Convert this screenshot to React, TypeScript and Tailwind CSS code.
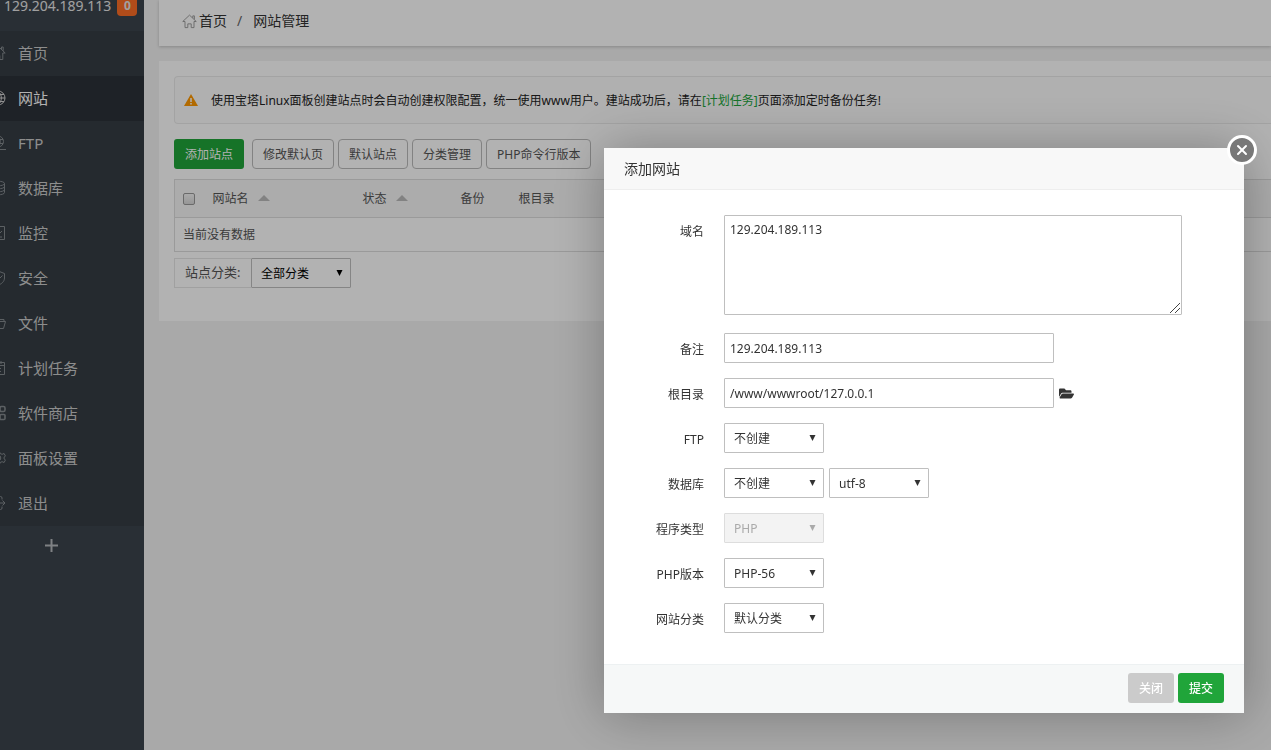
import React, { useState } from 'react';
import { clsx } from 'clsx';
import { FaFolderOpen } from 'react-icons/fa';
import { X } from 'lucide-react';

interface MenuItem {
  label: string;
  icon: React.ReactNode;
  active?: boolean;
}

const house = <path d="M.8 8L8 1.2 15.2 8h-2.4v6.5H9.8v-4H6.2v4h-3V8zM11.5 4.2V2h1.7v3.8" />;

const menu: MenuItem[] = [
  { label: '首页', icon: house },
  {
    label: '网站',
    icon: <path d="M8 1a7 7 0 100 14A7 7 0 008 1zM8 1v14M1 8h14M2 4.5h12M2 11.5h12M8 1c-4.5 4-4.5 10 0 14M8 1c4.5 4 4.5 10 0 14" />,
    active: true,
  },
  {
    label: 'FTP',
    icon: <path d="M8 1a5.5 5.5 0 100 11A5.5 5.5 0 008 1zM8 1c-3 3-3 8 0 11M8 1c3 3 3 8 0 11M3 4.5h10M3 8.5h10M8 12v2.5M1 14.5h15" />,
  },
  {
    label: '数据库',
    icon: <path d="M2 3.5C2 .5 14.5.5 14.5 3.5S2 6.500 2 3.500v9c0 3 12.500 3 12.500 0v-9M2 6.500c0 3 12.500 3 12.500 0M2 9.500c0 3 12.500 3 12.500 0" />,
  },
  { label: '监控', icon: <path d="M1.500 1.500h13v13h-13zM4 8l2-3 3 4 3-3M4 12h8" /> },
  { label: '安全', icon: <path d="M8 1l6.500 2.500V8c0 3.500-3 6-6.500 7.300C4.500 14 1.500 11.500 1.500 8V3.500zM5 8l2.500 2.500 5-5" /> },
  { label: '文件', icon: <path d="M2.500 13.500l-1-11h4l1.500 2h7v2M2.500 13.500h11l2-7H4.500z" /> },
  { label: '计划任务', icon: <path d="M1.500 2.500h13v12h-13zM1.500 5.500h13M5 1v3M11 1v3M5 8.500h6M5 11.500h6" /> },
  {
    label: '软件商店',
    icon: (
      <g strokeWidth="1.6">
        <rect x="1.500" y="1.500" width="5" height="5" rx="1" />
        <rect x="10" y="1.500" width="5" height="5" rx="1.500" />
        <rect x="1.500" y="9.500" width="5" height="5" rx="1" />
        <rect x="10" y="9.500" width="5" height="5" rx="1" />
      </g>
    ),
  },
  {
    label: '面板设置',
    icon: (
      <>
        <path d="M6.500 1.500h3l.6 2 2 .8 2-.8 1.200 2.300L13.800 8l1.500 2.200-1.200 2.300-2-.8-2 .8-.6 2h-3l-.6-2-2-.8-2 .8L.7 10.200 2.200 8 .7 5.800l1.200-2.300 2 .8 2-.8z" />
        <circle cx="8" cy="8" r="2.800" />
      </>
    ),
  },
  { label: '退出', icon: <path d="M12 4.500V3a1.500 1.500 0 00-1.500-1.500H3A1.500 1.500 0 001.500 3v10A1.500 1.500 0 003 14.500h7.500A1.500 1.500 0 0012 13v-1.500M6 8h9M12.500 5.500L15 8l-2.500 2.500" /> },
];

function LineIcon({ size, className, children }: { size: number; className?: string; children: React.ReactNode }) {
  return (
    <svg width={size} height={size} viewBox="0 0 16 16" fill="none" stroke="currentColor" strokeLinejoin="round" className={className}>
      {children}
    </svg>
  );
}

function Sidebar() {
  return (
    <aside className="w-36 shrink-0 overflow-hidden bg-[#3c444d]">
      <div className="flex h-[31px] items-start gap-1.5 pl-1 text-sm text-[#e6e6e6]">
        <span className="leading-3">129.204.189.113</span>
        <span className="flex h-4 w-5 justify-center rounded-b bg-[#fc6d26] text-xs font-bold leading-3">0</span>
      </div>
      <nav>
        {menu.map(({ label, icon, active }) => (
          <a
            key={label}
            href="#"
            className={clsx(
              'flex h-[45px] items-center gap-3 pb-0.5 text-[15px]',
              active ? 'bg-[#2c3138] text-white' : 'bg-[#353d44] text-[#cbcbcb]'
            )}
          >
            <LineIcon size={16} className={clsx('-ml-2.5 shrink-0', active ? 'text-[#d0d0d0]' : 'text-[#858a8f]')}>
              {icon}
            </LineIcon>
            {label}
          </a>
        ))}
      </nav>
      <button aria-label="添加" className="ml-[45px] mt-[13px] block text-[#b5b9bd]">
        <svg width="13" height="13" viewBox="0 0 13 13" stroke="currentColor" strokeWidth="2">
          <path d="M6.500 0v13M0 6.500h13" />
        </svg>
      </button>
    </aside>
  );
}

function SortArrow() {
  return (
    <svg width="12" height="6" viewBox="0 0 12 6" className="mb-0.5 ml-[9px] inline-block align-middle">
      <path d="M6 0l6 6H0z" fill="#bbb" />
    </svg>
  );
}

function Select({ id, options, disabled, label, className }: {
  id: string;
  options: string[];
  disabled?: boolean;
  label?: string;
  className?: string;
}) {
  return (
    <div className={clsx('relative w-[100px]', disabled && 'text-[#aaa]', className)}>
      <select
        id={id}
        aria-label={label}
        disabled={disabled}
        className="block h-[30px] w-full appearance-none rounded-[1px] border border-[#bfbfbf] bg-white px-[9px] pt-px text-xs disabled:border-[#ddd] disabled:bg-[#f3f3f3]"
      >
        {options.map(o => <option key={o}>{o}</option>)}
      </select>
      <svg width="7" height="6" viewBox="0 0 7 6" className="pointer-events-none absolute right-2 top-3">
        <path d="M.5 0h6L3.500 6z" fill="currentColor" />
      </svg>
    </div>
  );
}

function SitePage() {
  const buttons = ['修改默认页', '默认站点', '分类管理', 'PHP命令行版本'];

  return (
    <main className="min-w-0 flex-1 overflow-hidden bg-[#f2f2f2] pl-[15px]">
      <div className="flex h-[46px] items-center bg-white pb-1 pl-[23px] text-sm text-[#333] shadow-[0_1px_3px_rgba(0,0,0,0.2)]">
        <LineIcon size={15} className="mr-0.5 text-[#999]">{house}</LineIcon>
        <a href="#">首页</a>
        <span className="ml-2.5 mr-[11px] text-[#666]">/</span>
        <a href="#">网站管理</a>
      </div>

      <div className="mt-[15px] bg-white pb-[33px] pl-[15px] pt-[15px] text-[#555]">
        <div className="flex h-12 items-center rounded-l-sm border border-r-0 border-[#eaeaea] bg-[#fcfcfc] pl-[9px] text-[#222]">
          <svg width="14" height="12" viewBox="0 0 14 12" className="mr-[13px] shrink-0">
            <path d="M7 0l7 12H0z" fill="#ff9800" />
            <path d="M7 4v4M7 9v1.500" stroke="#fff" strokeWidth="1.500" />
          </svg>
          <p className="whitespace-nowrap pt-0.5">
            使用宝塔Linux面板创建站点时会自动创建权限配置，统一使用www用户。建站成功后，请在
            <a href="#" className="text-[#20a53a]">[计划任务]</a>
            页面添加定时备份任务!
          </p>
        </div>

        <div className="mt-[15px] flex gap-1">
          <button className="mr-1 h-[30px] rounded-[3px] bg-[#20a53a] px-[11px] pt-0.5 text-white">添加站点</button>
          {buttons.map(b => (
            <button key={b} className="h-[30px] rounded-sm border border-[#bbb] px-2.5 pt-0.5">{b}</button>
          ))}
        </div>

        <table className="mt-2.5 w-full border-collapse border border-r-0 border-[#ddd] text-left">
          <thead>
            <tr className="h-[38px] border-b border-[#ddd] bg-[#f6f6f6]">
              <th className="w-[38px] pl-2">
                <input
                  type="checkbox"
                  aria-label="全选"
                  className="block h-3 w-3 appearance-none rounded-xs border border-[#999] bg-linear-to-b from-[#f4f4f4] to-[#d8d8d8]"
                />
              </th>
              <th className="w-[150px] font-normal">网站名<SortArrow /></th>
              <th className="w-[98px] font-normal">状态<SortArrow /></th>
              <th className="w-[58px] font-normal">备份</th>
              <th className="font-normal">根目录</th>
            </tr>
          </thead>
          <tbody>
            <tr className="h-[34px]">
              <td colSpan={5} className="pl-2">当前没有数据</td>
            </tr>
          </tbody>
        </table>

        <div className="mt-1.5 flex h-[30px]">
          <label htmlFor="category" className="flex w-[77px] items-center border border-r-0 border-[#e6e6e6] pl-2.5 text-[13px]">
            站点分类:
          </label>
          <Select id="category" options={['全部分类']} className="text-black" />
        </div>
      </div>
    </main>
  );
}

function Field({ id, label, children }: { id: string; label: string; children: React.ReactNode }) {
  return (
    <div className="flex items-start">
      <label htmlFor={id} className="mr-5 w-[100px] shrink-0 pt-px text-right leading-8">{label}</label>
      {children}
    </div>
  );
}

function AddSiteDialog({ onClose }: { onClose: () => void }) {
  const [domain, setDomain] = useState('129.204.189.113');
  const [remark, setRemark] = useState('129.204.189.113');
  const [path, setPath] = useState('/www/wwwroot/127.0.0.1');
  const input = 'h-[30px] w-[330px] rounded-[1px] border border-[#bfbfbf] px-[5px] text-xs';

  return (
    <div className="fixed inset-0 flex items-start justify-end bg-black/30 pr-[27px] pt-[148px]">
      <div role="dialog" aria-label="添加网站" className="relative w-[640px] bg-white text-[#333] shadow-[1px_1px_50px_rgba(0,0,0,0.3)]">
        <h2 className="h-[42px] border-b border-[#eee] bg-[#f8f8f8] pl-5 text-sm leading-[42px]">添加网站</h2>
        <button
          aria-label="关闭窗口"
          onClick={onClose}
          className="absolute -right-[13px] -top-[13px] flex h-[30px] w-[30px] items-center justify-center rounded-full border-3 border-white bg-[#787878] text-white"
        >
          <X size={16} strokeWidth={3} />
        </button>

        <form className="flex flex-col gap-3 pb-7 pt-[25px]" onSubmit={e => e.preventDefault()}>
          <Field id="domain" label="域名">
            <div className="relative mb-1.5">
              <textarea
                id="domain"
                value={domain}
                onChange={e => setDomain(e.target.value)}
                className="block h-[100px] w-[458px] rounded-[1px] border border-[#bfbfbf] px-[5px] py-[3px] text-xs leading-[22px] [&::-webkit-resizer]:hidden"
              />
              <svg width="12" height="12" viewBox="0 0 12 12" stroke="#444" className="pointer-events-none absolute bottom-px right-px">
                <path d="M1 11L11 1M6 11l5-5" />
              </svg>
            </div>
          </Field>
          <Field id="remark" label="备注">
            <input id="remark" value={remark} onChange={e => setRemark(e.target.value)} className={input} />
          </Field>
          <Field id="path" label="根目录">
            <input id="path" value={path} onChange={e => setPath(e.target.value)} className={input} />
            <button type="button" aria-label="选择目录" className="ml-[5px] flex h-[30px] items-center">
              <FaFolderOpen size={15} />
            </button>
          </Field>
          <Field id="ftp" label="FTP">
            <Select id="ftp" options={['不创建']} />
          </Field>
          <Field id="database" label="数据库">
            <Select id="database" options={['不创建']} />
            <Select id="charset" label="字符集" options={['utf-8']} className="ml-[5px]" />
          </Field>
          <Field id="type" label="程序类型">
            <Select id="type" options={['PHP']} disabled />
          </Field>
          <Field id="version" label="PHP版本">
            <Select id="version" options={['PHP-56']} />
          </Field>
          <Field id="group" label="网站分类">
            <Select id="group" options={['默认分类']} />
          </Field>
        </form>

        <div className="flex justify-end gap-1 border-t border-[#edf1f2] bg-[#f6f8f8] pb-2.5 pr-5 pt-2 text-white">
          <button onClick={onClose} className="h-[30px] rounded-[3px] bg-[#cbcbcb] px-[11px] pt-0.5 font-medium">关闭</button>
          <button className="h-[30px] rounded-[3px] bg-[#20a53a] px-[11px] pt-0.5 font-medium">提交</button>
        </div>
      </div>
    </div>
  );
}

export default function App() {
  const [open, setOpen] = useState(true);

  return (
    <div className="flex min-h-screen overflow-hidden font-['Noto_Sans','Noto_Sans_CJK_SC',sans-serif] text-xs">
      <Sidebar />
      <SitePage />
      {open && <AddSiteDialog onClose={() => setOpen(false)} />}
    </div>
  );
}
